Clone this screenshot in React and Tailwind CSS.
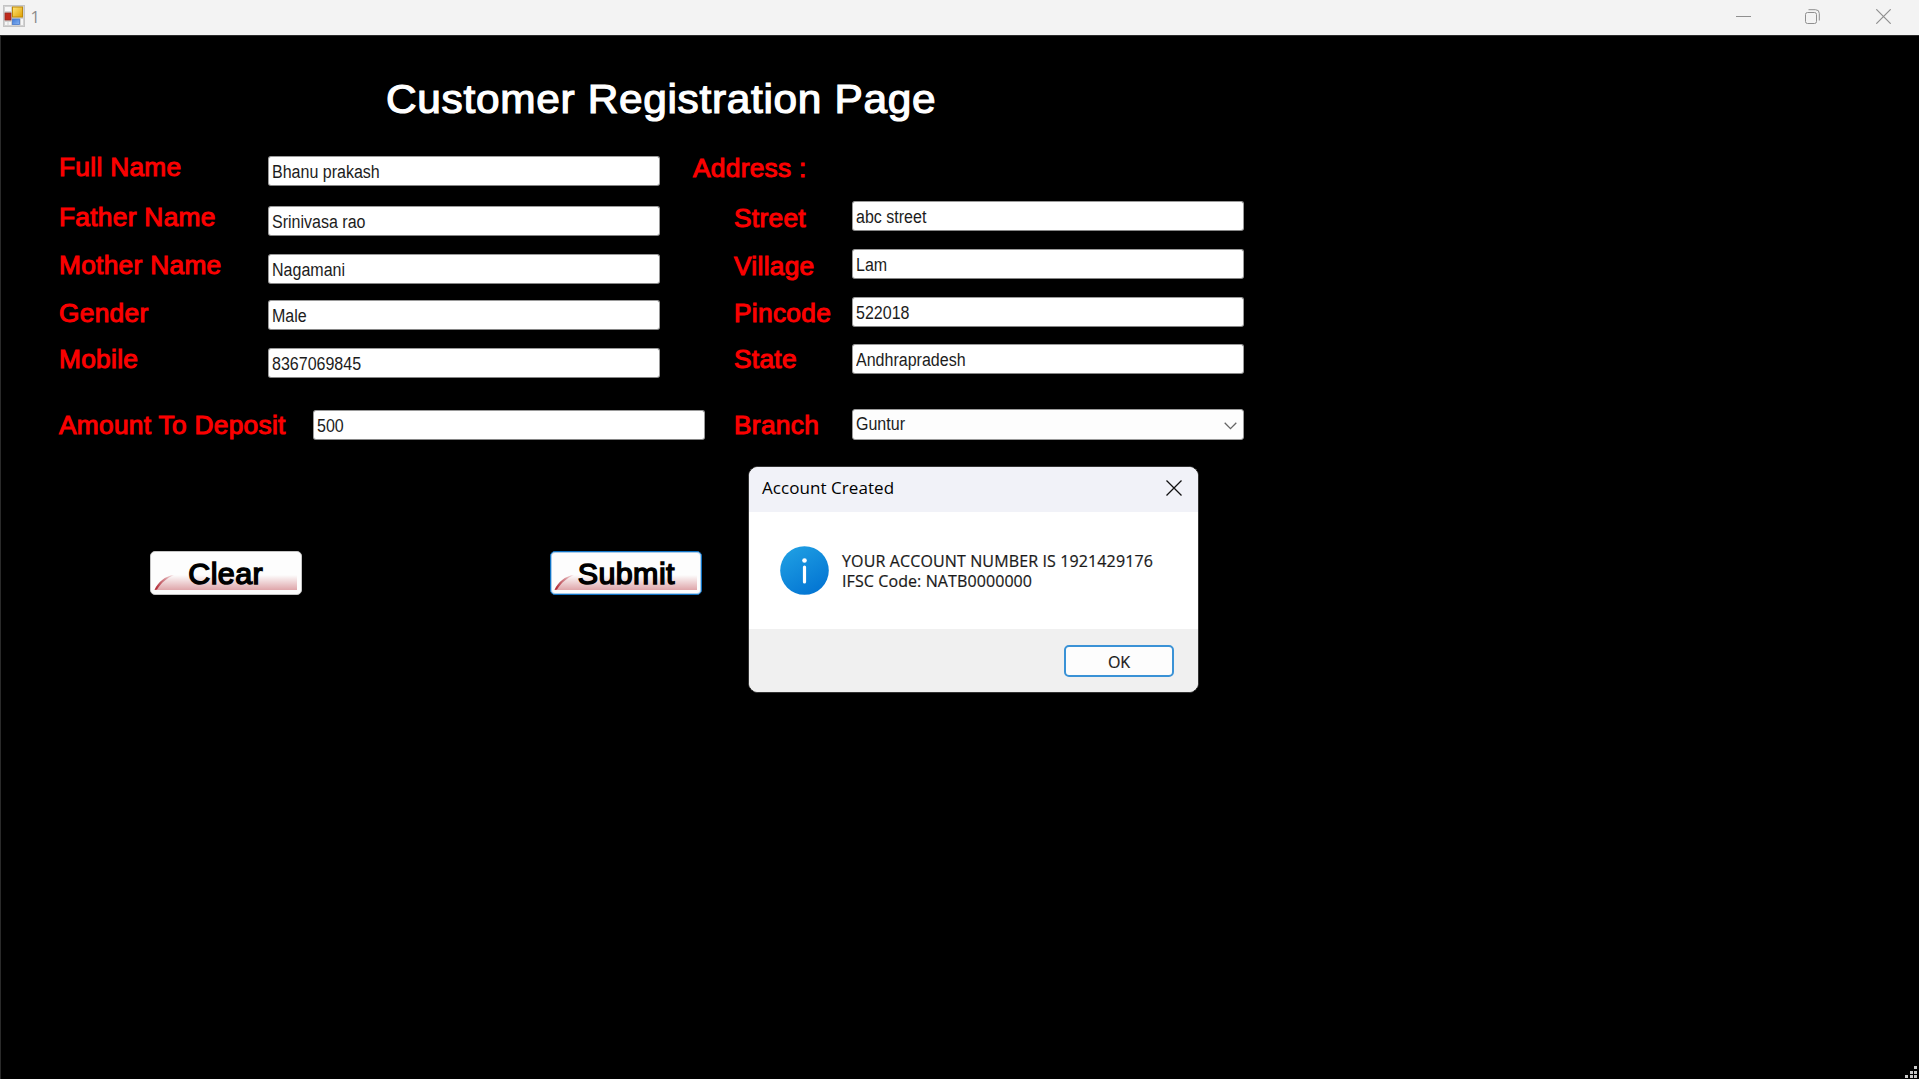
const LEFT = [
  { label: "Full Name", value: "Bhanu prakash", row: "h-[50px]", lab: "", inp: "mt-[3px]" },
  { label: "Father Name", value: "Srinivasa rao", row: "h-[48px]", lab: "", inp: "mt-[3px]" },
  { label: "Mother Name", value: "Nagamani", row: "h-[47px]", lab: "", inp: "mt-[3px]" },
  { label: "Gender", value: "Male", row: "h-[47px]", lab: "mt-px", inp: "mt-[2px]" },
  { label: "Mobile", value: "8367069845", row: "h-[65px]", lab: "", inp: "mt-[3px]" },
];

const RIGHT = [
  { label: "Street", value: "abc street", row: "h-[48px]", lab: "mt-[3px]", inp: "" },
  { label: "Village", value: "Lam", row: "h-[48px]", lab: "mt-[3px]", inp: "" },
  { label: "Pincode", value: "522018", row: "h-[47px]", lab: "mt-[2px]", inp: "" },
  { label: "State", value: "Andhrapradesh", row: "h-[65px]", lab: "mt-px", inp: "" },
];

const SANS = "font-['Liberation_Sans',Arial,sans-serif]";
const SEGOE = "font-['Open_Sans','Noto_Sans',sans-serif]";

function Label({ children, className = "" }) {
  return (
    <div
      className={`shrink-0 whitespace-nowrap text-[25px] leading-7 tracking-[0.300px] text-[#fb0000] [-webkit-text-stroke:1px_#fb0000] ${className}`}
    >
      <span className="inline-block origin-left scale-x-[1.05]">{children}</span>
    </div>
  );
}

function Value({ children }) {
  return (
    <span className="inline-block origin-left scale-x-[0.89] whitespace-nowrap text-[18px] leading-5 text-[#1c1c1c]">
      {children}
    </span>
  );
}

function TextBox({ value, className = "" }) {
  return (
    <div
      className={`flex h-[30px] w-[392px] shrink-0 items-start rounded-[3px] border border-[#9a9a9a] border-b-[#868686] bg-white pl-[3px] pt-[5px] ${className}`}
    >
      <Value>{value}</Value>
    </div>
  );
}

function Field({ item, labelWidth }) {
  return (
    <div className={`flex items-start ${item.row}`}>
      <Label className={`${labelWidth} ${item.lab}`}>{item.label}</Label>
      <TextBox value={item.value} className={item.inp} />
    </div>
  );
}

function FormButton({ children, focused, id }) {
  return (
    <button
      className={`relative flex h-[44px] w-[152px] items-center justify-center rounded-[5px] border bg-[#fdfdfd] ${
        focused ? "border-[#0f72c4] ring-1 ring-inset ring-[#a9cdec]" : "border-[#c4c4c4]"
      }`}
    >
      <svg className="absolute left-[3px] top-[22px]" width="144" height="17" viewBox="0 0 144 17">
        <defs>
          <linearGradient id={`${id}-fill`} x1="0" y1="0" x2="0" y2="1">
            <stop offset="0" stopColor="#fdfdfd" />
            <stop offset="1" stopColor="#dfa6aa" />
          </linearGradient>
          <linearGradient id={`${id}-edge`} x1="0" y1="1" x2="1" y2="0">
            <stop offset="0" stopColor="#ad1c28" />
            <stop offset="0.55" stopColor="#cf7c84" />
            <stop offset="1" stopColor="#f6e4e5" />
          </linearGradient>
        </defs>
        <path d="M1 16C5 8 12 2 20 1H143V16Z" fill={`url(#${id}-fill)`} />
        <path d="M0.500 16C4 8 11 2 20 1C13 4 7 9 3 15.500Z" fill={`url(#${id}-edge)`} />
      </svg>
      <span className="relative top-px scale-x-[1.05] text-[29px] leading-8 tracking-[0.400px] text-black [-webkit-text-stroke:1.400px_#000]">
        {children}
      </span>
    </button>
  );
}

function AppIcon() {
  return (
    <svg className="-mt-px" width="22" height="22" viewBox="0 0 22 22">
      <defs>
        <linearGradient id="gold" x1="0" y1="0" x2="1" y2="1">
          <stop offset="0" stopColor="#ffe57a" />
          <stop offset="1" stopColor="#e0a000" />
        </linearGradient>
        <linearGradient id="blue" x1="0" y1="0" x2="1" y2="1">
          <stop offset="0" stopColor="#3f7bd8" />
          <stop offset="1" stopColor="#8ab4f2" />
        </linearGradient>
      </defs>
      <rect x="0.500" y="0.500" width="21" height="21" fill="#d2d2d2" stroke="#c4c4c4" />
      <rect x="2" y="2" width="6" height="4" fill="#f6f6f6" />
      <rect x="9.500" y="2" width="10" height="10" fill="url(#gold)" stroke="#bf8a08" />
      <rect x="2" y="8" width="6" height="7" fill="#c02a1c" stroke="#96281e" strokeWidth="0.800" />
      <rect x="9.500" y="14" width="7" height="5.500" fill="url(#blue)" stroke="#4a7ccc" strokeWidth="0.800" />
      <rect x="2" y="17" width="2.500" height="3" fill="#f6f6f6" />
      <rect x="5.500" y="17" width="2.500" height="3" fill="#f6f6f6" />
      <rect x="18" y="14" width="2" height="6" fill="#f6f6f6" />
    </svg>
  );
}

function TitleBar() {
  return (
    <header className={`flex h-[35px] items-center bg-[#f3f3f3] pb-[2px] pl-[3px] ${SEGOE}`}>
      <AppIcon />
      <span className="ml-[5.500px] flex-1 pt-px text-[16.500px] leading-5 text-[#8b8b8b]">1</span>
      <svg className="mr-[54px]" width="15" height="15" viewBox="0 0 15 15">
        <path d="M0 7.500H15" stroke="#8f8f8f" />
      </svg>
      <svg className="mr-[56px]" width="15" height="15" viewBox="0 0 15 15" fill="none" stroke="#8f8f8f">
        <rect x="0.500" y="3.500" width="11" height="11" rx="2" />
        <path d="M3.500 0.700H10.500Q14.300 0.700 14.300 4.500V11.500" />
      </svg>
      <svg className="mr-[28px]" width="15" height="15" viewBox="0 0 15 15">
        <path d="M0.300 0.300L14.700 14.700M14.700 0.300L0.300 14.700" stroke="#8f8f8f" strokeWidth="1.200" />
      </svg>
    </header>
  );
}

function MessageBox() {
  return (
    <div
      className={`absolute left-[748px] top-[466px] flex h-[227px] w-[451px] flex-col overflow-hidden rounded-[10px] border border-[#333] bg-white ${SEGOE}`}
    >
      <div className="flex h-[45px] shrink-0 items-center justify-between bg-[#f1f2f8] pb-[3px] pl-[13px] pr-4">
        <span className="whitespace-nowrap text-[17px] leading-6 tracking-[0.060px] text-black">Account Created</span>
        <svg width="16" height="16" viewBox="0 0 16 16">
          <path d="M0.500 0.500L15.500 15.500M15.500 0.500L0.500 15.500" stroke="#111" strokeWidth="1.300" />
        </svg>
      </div>
      <div className="flex flex-1 items-start pl-[31px] pt-[34px]">
        <svg className="shrink-0" width="49" height="49" viewBox="0 0 49 49">
          <defs>
            <linearGradient id="info" x1="0.200" y1="0" x2="0.800" y2="1">
              <stop offset="0" stopColor="#1f9fe3" />
              <stop offset="1" stopColor="#0273d2" />
            </linearGradient>
          </defs>
          <circle cx="24.500" cy="24.500" r="24.300" fill="url(#info)" />
          <circle cx="24.500" cy="14.500" r="2.300" fill="#fff" />
          <rect x="22.900" y="19.500" width="3.200" height="18" rx="1.600" fill="#fff" />
        </svg>
        <div className="ml-[13px] mt-[6px] whitespace-nowrap text-[16px] leading-[19.500px] text-[#1a1a1a] [-webkit-text-stroke:0.200px_#1a1a1a]">
          <div className="tracking-[0.130px]">YOUR ACCOUNT NUMBER IS 1921429176</div>
          <div className="tracking-[0.100px]">IFSC Code: NATB0000000</div>
        </div>
      </div>
      <div className="flex h-[63px] shrink-0 items-center justify-end bg-[#f0f0f0] pr-6">
        <button className="h-[32px] w-[110px] rounded-[5px] border-2 border-[#3a92d6] bg-[#fdfdfd] pt-px text-[16px] leading-7 text-[#1a1a1a] [-webkit-text-stroke:0.200px_#1a1a1a]">
          OK
        </button>
      </div>
    </div>
  );
}

function SizeGrip() {
  return (
    <div className="absolute bottom-[1px] right-[2px] grid grid-cols-3 gap-[1.500px]">
      {[0, 0, 1, 0, 1, 1, 1, 1, 1].map((on, i) => (
        <span key={i} className={`size-[3px] ${on ? "bg-[#c9c9c9]" : ""}`} />
      ))}
    </div>
  );
}

export default function App() {
  return (
    <div className={`relative flex h-[1079px] w-[1919px] flex-col overflow-hidden bg-black ${SANS}`}>
      <TitleBar />
      <main className="flex-1 border-l border-t border-[#2a2a2a] pl-[58px]">
        <h1 className="ml-[327px] mt-[40px] h-[46px] origin-left scale-x-[1.060] whitespace-nowrap text-[40px] leading-[46px] tracking-[0.640px] text-white [-webkit-text-stroke:1.200px_#fff]">
          Customer Registration Page
        </h1>
        <div className="mt-[31px] flex">
          <section className="w-[634px]">
            {LEFT.map((f) => (
              <Field key={f.label} item={f} labelWidth="w-[209px]" />
            ))}
            <div className="flex items-start">
              <Label className="mt-px w-[254px]">Amount To Deposit</Label>
              <TextBox value="500" />
            </div>
          </section>
          <section>
            <Label className="mb-5 mt-px">Address :</Label>
            <div className="-mt-px ml-[41px]">
              {RIGHT.map((f) => (
                <Field key={f.label} item={f} labelWidth="w-[118px]" />
              ))}
              <div className="flex items-start">
                <Label className="mt-[2px] w-[118px]">Branch</Label>
                <div className="flex h-[31px] w-[392px] items-start justify-between rounded-[3px] border border-[#9a9a9a] bg-[#fdfdfd] pl-[3px] pr-[6px] pt-[4px]">
                  <Value>Guntur</Value>
                  <svg className="mt-[8px]" width="13" height="8" viewBox="0 0 13 8" fill="none">
                    <path d="M0.700 0.800L6.500 6.600L12.300 0.800" stroke="#666" strokeWidth="1.300" />
                  </svg>
                </div>
              </div>
            </div>
          </section>
        </div>
        <div className="ml-[91px] mt-[111px] flex gap-[248px]">
          <FormButton id="clear">Clear</FormButton>
          <FormButton id="submit" focused>Submit</FormButton>
        </div>
      </main>
      <MessageBox />
      <SizeGrip />
    </div>
  );
}
